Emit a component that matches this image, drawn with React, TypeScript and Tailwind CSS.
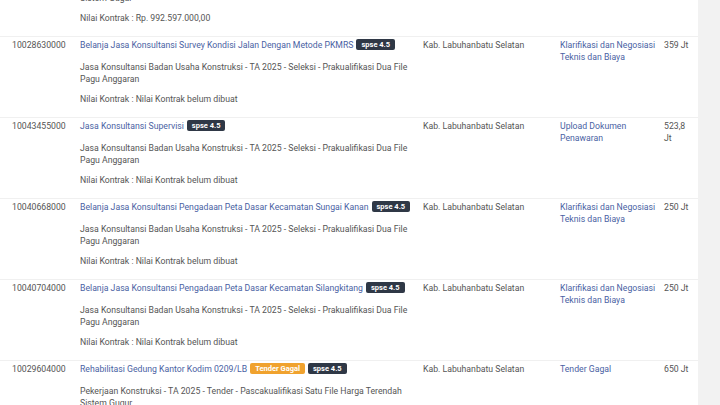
import React from "react";

type Row = {
  id: string;
  title: string;
  gagal?: boolean;
  desc: string;
  nilai: string;
  lokasi: string;
  status: string;
  hps: string;
};

const KONSULTAN =
  "Jasa Konsultansi Badan Usaha Konstruksi - TA 2025 - Seleksi - Prakualifikasi Dua File Pagu Anggaran";
const BELUM = "Nilai Kontrak belum dibuat";

const rows: Row[] = [
  {
    id: "10029571000",
    title: "Pembangunan Jalan Lingkar Kota Pinang",
    desc: "Pekerjaan Konstruksi - TA 2025 - Tender - Pascakualifikasi Satu File Harga Terendah Sistem Gugur",
    nilai: "Rp. 992.597.000,00",
    lokasi: "Kab. Labuhanbatu Selatan",
    status: "Tender Sudah Selesai",
    hps: "1 M",
  },
  {
    id: "10028630000",
    title: "Belanja Jasa Konsultansi Survey Kondisi Jalan Dengan Metode PKMRS",
    desc: KONSULTAN,
    nilai: BELUM,
    lokasi: "Kab. Labuhanbatu Selatan",
    status: "Klarifikasi dan Negosiasi Teknis dan Biaya",
    hps: "359 Jt",
  },
  {
    id: "10043455000",
    title: "Jasa Konsultansi Supervisi",
    desc: KONSULTAN,
    nilai: BELUM,
    lokasi: "Kab. Labuhanbatu Selatan",
    status: "Upload Dokumen Penawaran",
    hps: "523,8 Jt",
  },
  {
    id: "10040668000",
    title: "Belanja Jasa Konsultansi Pengadaan Peta Dasar Kecamatan Sungai Kanan",
    desc: KONSULTAN,
    nilai: BELUM,
    lokasi: "Kab. Labuhanbatu Selatan",
    status: "Klarifikasi dan Negosiasi Teknis dan Biaya",
    hps: "250 Jt",
  },
  {
    id: "10040704000",
    title: "Belanja Jasa Konsultansi Pengadaan Peta Dasar Kecamatan Silangkitang",
    desc: KONSULTAN,
    nilai: BELUM,
    lokasi: "Kab. Labuhanbatu Selatan",
    status: "Klarifikasi dan Negosiasi Teknis dan Biaya",
    hps: "250 Jt",
  },
  {
    id: "10029604000",
    title: "Rehabilitasi Gedung Kantor Kodim 0209/LB",
    gagal: true,
    desc: "Pekerjaan Konstruksi - TA 2025 - Tender - Pascakualifikasi Satu File Harga Terendah Sistem Gugur",
    nilai: BELUM,
    lokasi: "Kab. Labuhanbatu Selatan",
    status: "Tender Gagal",
    hps: "650 Jt",
  },
];

function Badge({ children, tone }: { children: React.ReactNode; tone: "dark" | "warn" }) {
  return (
    <span
      className={`ml-[3px] inline-block rounded-[2px] px-[5px] align-[1px] text-[7.5px] font-bold leading-[11px] text-white ${
        tone === "dark" ? "bg-[#2f3846]" : "bg-[#f0a22e]"
      }`}
    >
      {children}
    </span>
  );
}

function PaketRow({ row }: { row: Row }) {
  return (
    <div className="grid grid-cols-[80px_343px_137px_104px_30px] border-t border-[#f0f0f0] pb-[12px] pt-[2px] leading-[12px]">
      <div className="pl-[12px]">{row.id}</div>
      <div className="pr-[8px]">
        <div>
          <a className="text-[#4a62a3]">{row.title}</a>
          {row.gagal && <Badge tone="warn">Tender Gagal</Badge>}
          <Badge tone="dark">spse 4.5</Badge>
        </div>
        <p className="mt-[10px]">{row.desc}</p>
        <p className="mt-[8px]">Nilai Kontrak : {row.nilai}</p>
      </div>
      <div className="pr-[8px]">{row.lokasi}</div>
      <div className="pr-[8px]">
        <a className="text-[#4a62a3]">{row.status}</a>
      </div>
      <div>{row.hps}</div>
    </div>
  );
}

export default function App() {
  return (
    <div className="flex h-[405px] w-[720px] overflow-hidden bg-[#f2f2f2] font-['Roboto',sans-serif] text-[8.7px] text-[#555]">
      <div className="w-[698px] shrink-0 bg-white">
        <div className="-mt-[45px]">
          {rows.map((r) => (
            <PaketRow key={r.id} row={r} />
          ))}
        </div>
      </div>
    </div>
  );
}
